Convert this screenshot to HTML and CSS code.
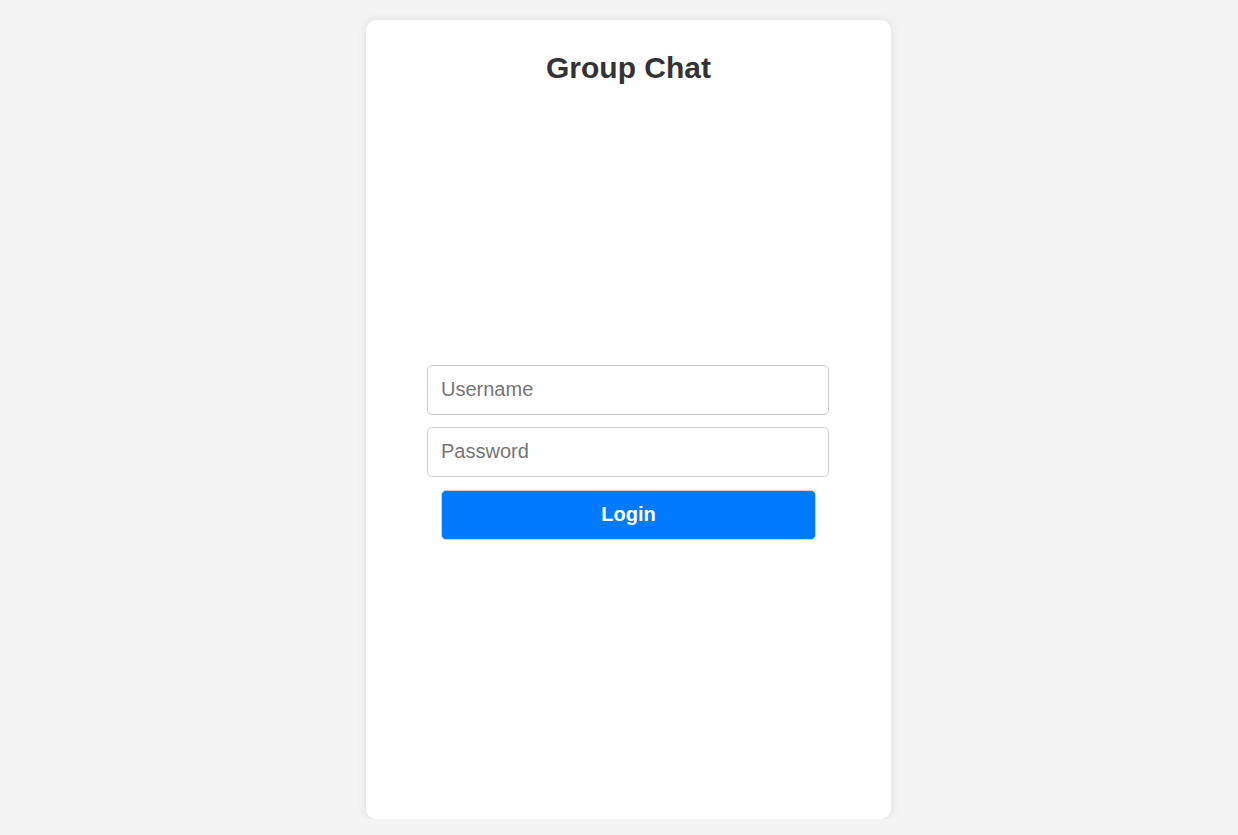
FILE: index.html
```html
<!DOCTYPE html>
<html>
<head>
<meta charset="utf-8">
<link rel="stylesheet" href="styles.css">
</head>
<body>
<div class="card">
  <h1 class="title">Group Chat</h1>
  <form class="login">
    <input class="field" type="text" placeholder="Username">
    <input class="field" type="password" placeholder="Password">
    <button class="btn" type="button">Login</button>
  </form>
</div>
</body>
</html>
```
FILE: styles.css
```css
html, body {
  margin: 0;
  padding: 0;
}
body {
  background: #f4f4f4;
  font-family: "Liberation Sans", Arial, sans-serif;
  display: flex;
  justify-content: center;
  padding-top: 20px;
  padding-left: 19px;
}
.card {
  box-sizing: border-box;
  width: 525px;
  height: 799px;
  background: #fff;
  border-radius: 10px;
  box-shadow: 0 0 10px rgba(0, 0, 0, 0.1);
  padding-top: 31px;
  display: flex;
  flex-direction: column;
  align-items: center;
}
.title {
  margin: 0;
  font-size: 30px;
  line-height: 34px;
  font-weight: bold;
  color: #333;
}
.login {
  margin-top: 280px;
  display: flex;
  flex-direction: column;
  align-items: center;
  gap: 12px;
}
.field {
  box-sizing: border-box;
  width: 402px;
  height: 50px;
  margin-right: 1px;
  border: 1px solid #ccc;
  border-radius: 5px;
  padding: 0 13px 2px;
  font-family: "Liberation Sans", Arial, sans-serif;
  font-size: 20px;
  color: #333;
  outline: none;
}
.field::placeholder {
  color: #757575;
}
.btn {
  margin-top: 1px;
  box-sizing: border-box;
  width: 375px;
  height: 50px;
  padding: 0 0 2px;
  background: #007bff;
  color: #fff;
  border: 1px solid #d0d0d0;
  border-radius: 5px;
  font-family: "Liberation Sans", Arial, sans-serif;
  font-size: 20px;
  font-weight: bold;
}
```
